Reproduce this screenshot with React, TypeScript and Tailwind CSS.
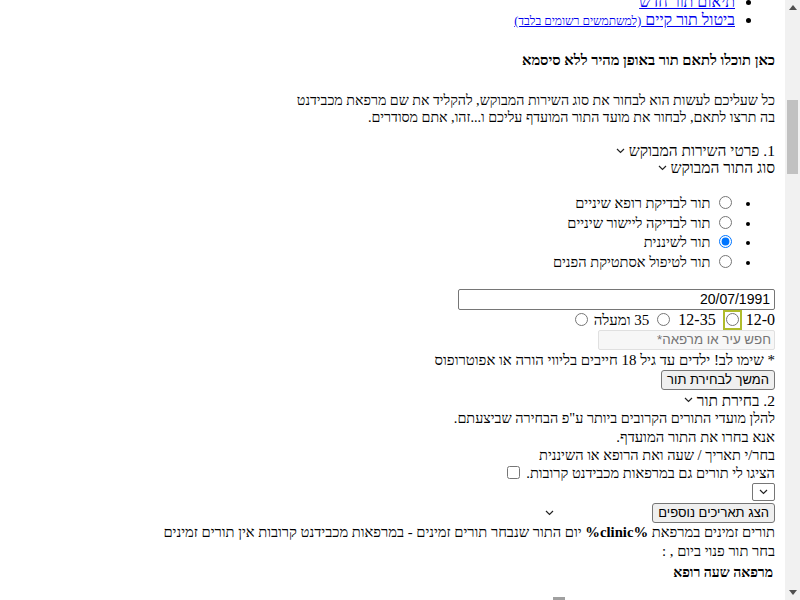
import React from "react";

const Chevron = ({ className = "" }: { className?: string }) => (
  <svg width="9" height="6" viewBox="0 0 9 6" className={className} fill="none" stroke="#222" strokeWidth="1.2">
    <path d="M1 1 L4.5 4.5 L8 1" />
  </svg>
);

export default function App() {
  return (
    <div className="flex h-[600px] w-[800px] overflow-hidden bg-white" style={{ fontFamily: '"Liberation Serif", "Times New Roman", serif' }}>
      <div dir="rtl" className="flex-1 overflow-hidden text-[16px] text-black">
        <div className="mt-[-7px] pr-[10px]">
          {/* top links list */}
          <ul className="list-disc pr-[40px]">
            <li className="h-[18px] leading-[18px]">
              <a className="text-[#0000ee] underline">תיאום תור חדש</a>
            </li>
            <li className="h-[18px] leading-[18px]">
              <a className="text-[#0000ee] underline">
                ביטול תור קיים <span className="text-[12px]">(למשתמשים רשומים בלבד)</span>
              </a>
            </li>
          </ul>

          <h5 className="mt-[23px] h-[16px] text-[14.7px] font-bold leading-[16px]">כאן תוכלו לתאם תור באופן מהיר ללא סיסמא</h5>

          <p className="mt-[24px] text-[14.2px] leading-[17px]">
            כל שעליכם לעשות הוא לבחור את סוג השירות המבוקש, להקליד את שם מרפאת מכבידנט
            <br />
            בה תרצו לתאם, לבחור את מועד התור המועדף עליכם ו...זהו, אתם מסודרים.
          </p>

          <div className="mt-[16px] flex h-[17px] items-center gap-[4px] text-[15.5px] leading-[17px]">
            <span>1. פרטי השירות המבוקש</span>
            <Chevron />
          </div>
          <div className="flex h-[17px] items-center gap-[4px] text-[15.5px] leading-[17px]">
            <span>סוג התור המבוקש</span>
            <Chevron />
          </div>

          <ul className="mt-[18px] list-disc pr-[40px] text-[14.6px]">
            {[
              ["תור לבדיקת רופא שיניים", false],
              ["תור לבדיקה ליישור שיניים", false],
              ["תור לשיננית", true],
              ["תור לטיפול אסתטיקת הפנים", false],
            ].map(([label, checked], i) => (
              <li key={i} className="h-[19.7px] leading-[19.7px]">
                <input type="radio" name="svc" defaultChecked={checked as boolean} className="mr-[3px] ml-[5px] align-[-1px]" />
                {" "}
                {label as string}
              </li>
            ))}
          </ul>

          <div className="mt-[16px]">
            <input
              type="text"
              defaultValue="20/07/1991"
              className="block h-[21px] w-[317px] rounded-[2px] border border-[#767676] px-[4px] text-[14px] leading-[19px]"
              style={{ fontFamily: '"Liberation Sans", Arial, sans-serif' }}
            />
          </div>

          <div className="flex h-[20px] items-center leading-[20px]">
            <span>12-0</span>
            <span className="mx-[4px] flex h-[20px] w-[19px] items-center justify-center border-2 border-[#b0bc2a]">
              <input type="radio" name="age" className="m-0" />
            </span>
            <span className="mr-[3px]">12-35</span>
            <input type="radio" name="age" className="mr-[8px] ml-[5px]" />
            <span className="mr-[3px] text-[15px]">35 ומעלה</span>
            <input type="radio" name="age" className="mr-[6px]" />
          </div>

          <input
            type="text"
            placeholder="חפש עיר או מרפאה*"
            className="block h-[20px] w-[177px] rounded-[2px] border border-[#e0e0e0] bg-[#f7f7f7] px-[3px] text-[13.33px] placeholder:text-[#757575]"
            style={{ fontFamily: '"Liberation Sans", Arial, sans-serif' }}
          />

          <div className="flex h-[20px] items-center text-[14.9px] leading-[20px]">* שימו לב! ילדים עד גיל 18 חייבים בליווי הורה או אפוטרופוס</div>

          <button
            className="block h-[20px] rounded-[3px] border border-[#767676] bg-[#efefef] px-[5px] text-[13px] leading-[18px]"
            style={{ fontFamily: '"Liberation Sans", Arial, sans-serif' }}
          >
            המשך לבחירת תור
          </button>

          <div className="mt-[2px] flex h-[17px] items-center gap-[4px] text-[15.5px] leading-[17px]">
            <span>2. בחירת תור</span>
            <Chevron />
          </div>
          <div className="h-[19px] text-[14.4px] leading-[19px]">להלן מועדי התורים הקרובים ביותר ע"פ הבחירה שביצעתם.</div>
          <div className="h-[19px] text-[14.8px] leading-[19px]">אנא בחרו את התור המועדף.</div>
          <div className="h-[17px] text-[14.5px] leading-[17px]">בחר/י תאריך / שעה ואת הרופא או השיננית</div>
          <div className="flex h-[18px] items-center text-[14.6px] leading-[18px]">
            <span>הציגו לי תורים גם במרפאות מכבידנט קרובות.</span>
            <input type="checkbox" className="mr-[6px]" />
          </div>

          <div className="flex h-[20px] items-center">
            <div className="flex h-[18px] w-[23px] items-center justify-center rounded-[2px] border border-[#767676]">
              <Chevron />
            </div>
          </div>

          <div className="mt-[1px] flex h-[20px] items-center">
            <button
              className="h-[20px] rounded-[3px] border border-[#767676] bg-[#efefef] px-[5px] text-[13px] leading-[18px]"
              style={{ fontFamily: '"Liberation Sans", Arial, sans-serif' }}
            >
              הצג תאריכים נוספים
            </button>
            <Chevron className="mr-[98px]" />
          </div>

          <div className="text-[14.7px] leading-[19px]">
            <div>
              תורים זמינים במרפאת <b>%clinic%</b> יום התור שנבחר תורים זמינים - במרפאות מכבידנט קרובות אין תורים זמינים
            </div>
            <div>בחר תור פנוי ביום , :</div>
          </div>

          <div className="mt-[3px] h-[18px] pr-[2px] text-[14px] font-bold leading-[18px]">מרפאה שעה רופא</div>

          <div className="mt-[15px] mr-[210px] h-[4px] w-[12px] bg-[#a0a0a0]" />
        </div>
      </div>

      {/* scrollbar */}
      <div className="relative flex h-full w-[15px] flex-col bg-[#f1f1f1]">
        <div className="flex h-[15px] items-center justify-center">
          <svg width="8" height="5" viewBox="0 0 8 5"><path d="M0 5 L4 0 L8 5 Z" fill="#505050" /></svg>
        </div>
        <div className="mt-[85px] mx-[2px] h-[74px] bg-[#c1c1c1]" />
        <div className="flex-1" />
        <div className="flex h-[15px] items-center justify-center">
          <svg width="8" height="5" viewBox="0 0 8 5"><path d="M0 0 L8 0 L4 5 Z" fill="#505050" /></svg>
        </div>
      </div>
    </div>
  );
}
